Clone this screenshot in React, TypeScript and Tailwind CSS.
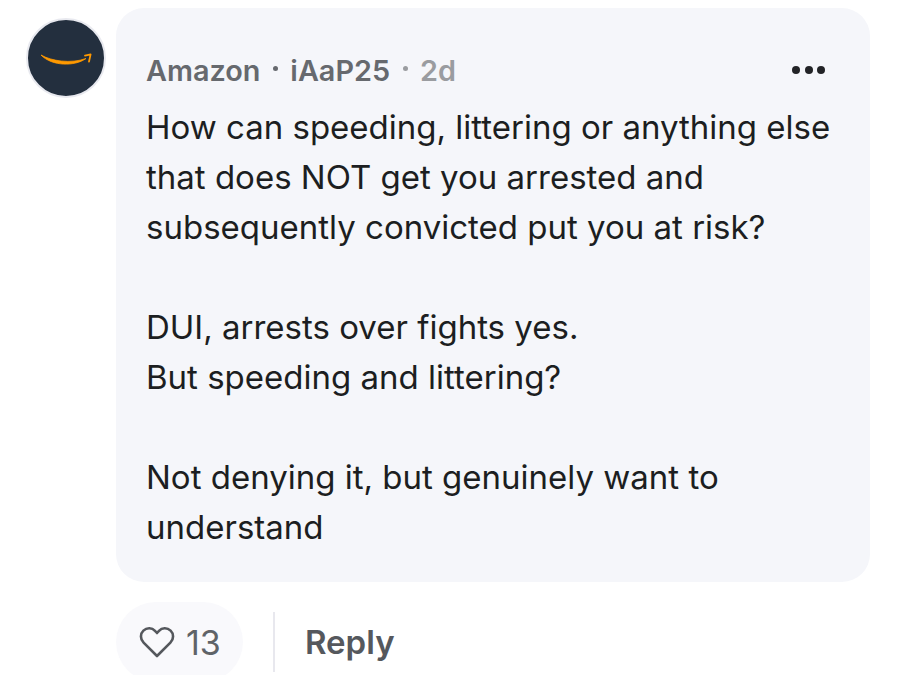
function AmazonAvatar() {
  return (
    <div className="flex h-[80px] w-[80px] shrink-0 items-center justify-center rounded-full border-2 border-[#e8e9ef] bg-[#232f3e]">
      <svg width="54" height="18" viewBox="0 0 54 18" fill="none">
        <path d="M2 6C12 12 32 15 47 9.5C36 17.5 13 17.5 2 6Z" fill="#ff9900" stroke="#ff9900" strokeWidth="0.8" strokeLinejoin="round" />
        <path d="M46 6.6L51.6 5.4L50 12.6" stroke="#ff9900" strokeWidth="1.8" strokeLinecap="round" strokeLinejoin="round" />
      </svg>
    </div>
  );
}

function HeartIcon() {
  return (
    <svg width="36" height="34" viewBox="0 0 36 34" fill="none">
      <path
        d="M18 31L4.6 17.6C1 14 1.2 8.6 4.4 5.6C7.8 2.4 13 2.6 16 5.8L18 8L20 5.8C23 2.6 28.2 2.4 31.6 5.6C34.8 8.6 35 14 31.4 17.6Z"
        stroke="#55585d"
        strokeWidth="2.6"
        strokeLinejoin="round"
      />
    </svg>
  );
}

function Dot({ color }: { color: string }) {
  return <span className={`h-[5px] w-[5px] -translate-y-[3px] rounded-full ${color}`} />;
}

export default function App() {
  return (
    <div className="h-[675px] w-[904px] overflow-hidden bg-white font-['Inter',sans-serif]">
      <div className="flex gap-[10px] pl-[26px] pt-[8px]">
        <div className="pt-[10px]"><AmazonAvatar /></div>
        <div className="w-[754px]">
          <div className="rounded-[28px] bg-[#f5f6fa] pb-[30px] pl-[30px] pr-[45px] pt-[45px]">
            <div className="flex items-center justify-between">
              <div className="flex items-center gap-[12.5px] text-[28.8px] font-semibold leading-[36px] text-[#66696e]">
                <span>Amazon</span>
                <Dot color="bg-[#66696e]" />
                <span>iAaP25</span>
                <Dot color="bg-[#9a9ca0]" />
                <span className="text-[#9a9ca0]">2d</span>
              </div>
              <div className="flex -translate-y-[1px] gap-[4.5px]">
                <span className="h-[8px] w-[8px] rounded-full bg-[#222326]" />
                <span className="h-[8px] w-[8px] rounded-full bg-[#222326]" />
                <span className="h-[8px] w-[8px] rounded-full bg-[#222326]" />
              </div>
            </div>
            <div className="mt-[13px] whitespace-nowrap text-[33px] leading-[50px] text-[#1c1e21]">
              <p>How can speeding, littering or anything else</p>
              <p>that does NOT get you arrested and</p>
              <p>subsequently convicted put you at risk?</p>
              <p className="h-[50px]" />
              <p>DUI, arrests over fights yes.</p>
              <p>But speeding and littering?</p>
              <p className="h-[50px]" />
              <p>Not denying it, but genuinely want to</p>
              <p>understand</p>
            </div>
          </div>
          <div className="mt-[20px] flex items-center">
            <div className="flex h-[80px] w-[127px] items-center gap-[11px] rounded-full bg-[#f9f9fc] pl-[23px] text-[#5f6368]">
              <HeartIcon />
              <span className="text-[34px]">13</span>
            </div>
            <div className="ml-[30px] h-[60px] w-[2px] bg-[#e8e8ee]" />
            <span className="ml-[30px] translate-y-[1px] text-[33px] font-semibold text-[#55585d]">Reply</span>
          </div>
        </div>
      </div>
    </div>
  );
}
